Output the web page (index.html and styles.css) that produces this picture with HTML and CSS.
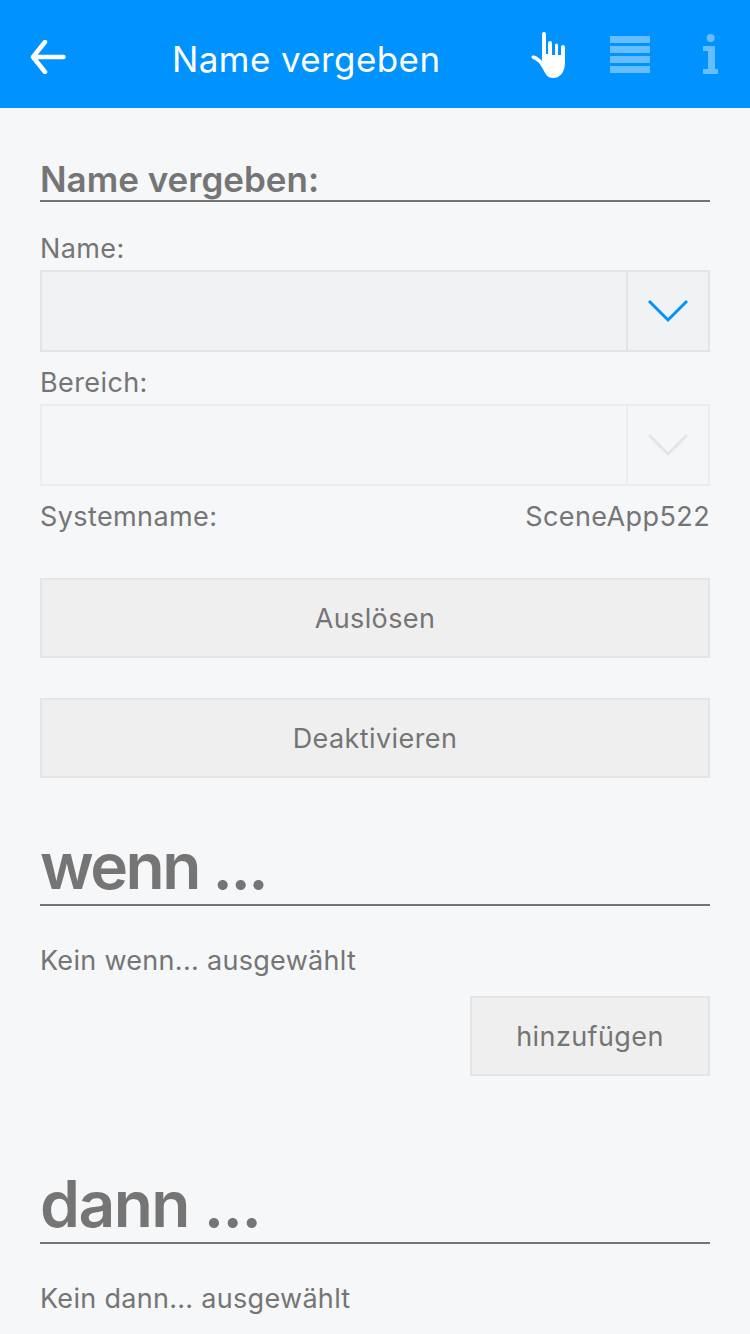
FILE: index.html
```html
<!DOCTYPE html>
<html lang="de">
<head>
<meta charset="utf-8">
<title>Name vergeben</title>
<link rel="stylesheet" href="styles.css">
</head>
<body>
<header class="topbar">
  <div class="back">
    <svg width="36" height="34" viewBox="0 0 36 34"><path d="M33.500 17H3M15 2 3 17l12 15" fill="none" stroke="#fff" stroke-width="4.500" stroke-linecap="round" stroke-linejoin="round"/></svg>
  </div>
  <div class="title">Name vergeben</div>
  <div class="tabs">
    <div class="tab">
      <svg class="hand" width="36" height="48" viewBox="0 0 36 48"><path d="M12 3a2 2 0 0 1 4 0V23h2V12a2 2 0 0 1 4 0V24h3V14a1.500 1.500 0 0 1 3 0V24h3V16a2 2 0 0 1 4 0V31C35 40 31 47 23 47C18 47 16 44 14 40C12 36.500 10.500 34 9 32C8 30.700 5 29 3 28C.5 26.500 1.500 24 4 24.500C7 25 10 28 12 30Z" fill="#fff"/></svg>
    </div>
    <div class="tab dim">
      <div class="bars"><i></i><i></i><i></i><i></i></div>
    </div>
    <div class="tab dim">
      <svg width="16" height="40" viewBox="0 0 16 40"><circle cx="8.700" cy="4" r="4" fill="#fff"/><path d="M1 12h12v23h3v5H1v-5h5V17H1Z" fill="#fff"/></svg>
    </div>
  </div>
</header>
<main class="content">
  <h2 class="section-small">Name vergeben:</h2>
  <label class="field-label first">Name:</label>
  <div class="select">
    <div class="select-value"></div>
    <div class="select-arrow"><svg width="42" height="24" viewBox="0 0 42 24"><path d="M2 2l19 19L40 2" fill="none" stroke="#0092ff" stroke-width="3"/></svg></div>
  </div>
  <label class="field-label">Bereich:</label>
  <div class="select disabled">
    <div class="select-value"></div>
    <div class="select-arrow"><svg width="42" height="24" viewBox="0 0 42 24"><path d="M2 2l19 19L40 2" fill="none" stroke="#e3e4e5" stroke-width="3"/></svg></div>
  </div>
  <div class="sysrow"><span>Systemname:</span><span>SceneApp522</span></div>
  <button class="btn full first-btn">Auslösen</button>
  <button class="btn full second-btn">Deaktivieren</button>
  <h1 class="section-big wenn">wenn ...</h1>
  <p class="empty">Kein wenn... ausgewählt</p>
  <div class="actions"><button class="btn add">hinzufügen</button></div>
  <h1 class="section-big dann">dann ...</h1>
  <p class="empty">Kein dann... ausgewählt</p>
</main>
</body>
</html>
```
FILE: styles.css
```css
* { box-sizing: border-box; }
html, body { margin: 0; height: 100%; }
body {
  width: 750px;
  height: 1334px;
  overflow: hidden;
  background: #f6f7f9;
  color: #757575;
  font-family: "Inter", "Liberation Sans", sans-serif;
}
.topbar {
  height: 108px;
  background: #0092ff;
  display: flex;
  align-items: center;
  color: #fff;
}
.back { width: 172px; padding: 6px 0 0 30px; display: flex; }
.title { width: 268px; padding-top: 10px; font-size: 35px; letter-spacing: .4px; white-space: nowrap; }
.tabs { display: flex; margin-left: 70px; }
.tab { width: 80px; height: 108px; display: flex; align-items: center; justify-content: center; }
.hand { margin: 2px 4px 0 0; }
.dim { opacity: .4; }
.bars { width: 40px; display: flex; flex-direction: column; gap: 3px; }
.bars i { display: block; height: 7px; background: #fff; }
.content { padding: 0 40px; }
.section-small {
  margin: 52px 0 0;
  height: 42px;
  line-height: 38px;
  font-size: 35px;
  font-weight: 600;
  border-bottom: 2px solid #757575;
}
.field-label { display: block; height: 34px; line-height: 26px; font-size: 27px; letter-spacing: .4px; }
.field-label.first { margin-top: 28px; height: 40px; line-height: 38px; }
.select {
  display: flex;
  height: 82px;
  border: 2px solid #e3e4e5;
  background: #f1f2f4;
}
.select-value { flex: 1; }
.select-arrow { width: 82px; border-left: 2px solid #e3e4e5; display: flex; align-items: center; justify-content: center; }
.select.disabled { border-color: #eceded; background: #f5f6f8; }
.select.disabled .select-arrow { border-color: #eceded; }
.select + .field-label { margin-top: 18px; }
.sysrow { display: flex; justify-content: space-between; font-size: 27px; letter-spacing: .4px; margin-top: 15px; margin-bottom: -1px; line-height: 32px; }
.btn {
  display: block;
  height: 80px;
  border: 2px solid #e3e4e5;
  background: #efefef;
  color: #757575;
  font: inherit;
  font-size: 27px;
  letter-spacing: .4px;
  padding: 0;
}
.full { width: 100%; }
.first-btn { margin-top: 46px; }
.second-btn { margin-top: 40px; }
.section-big {
  margin: 0;
  font-size: 64px;
  font-weight: 600;
  letter-spacing: -1.500px;
  height: 84px;
  line-height: 88px;
  border-bottom: 2px solid #757575;
}
.section-big.wenn { margin-top: 44px; letter-spacing: -2.500px; }
.dann { margin-top: 84px; }
.empty { margin: 39px 0 -1px; font-size: 27px; letter-spacing: .3px; line-height: 32px; }
.actions { display: flex; justify-content: flex-end; margin-top: 20px; }
.add { width: 240px; }
```
